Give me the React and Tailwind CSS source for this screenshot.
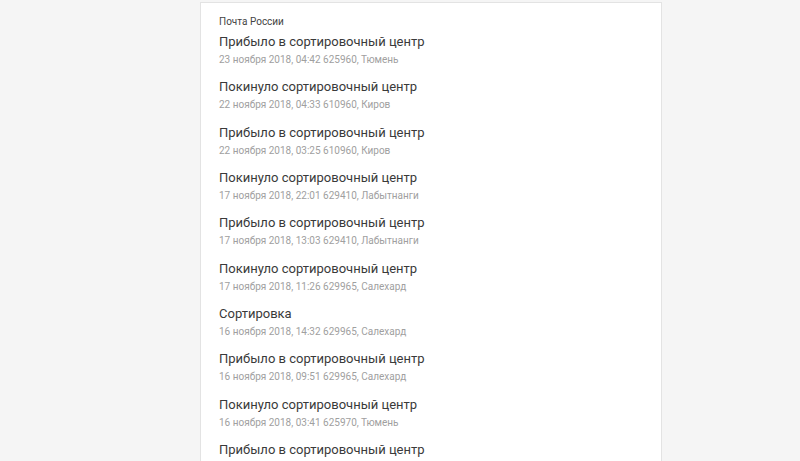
import React from "react";

const events = [
  { title: "Прибыло в сортировочный центр", date: "23 ноября 2018, 04:42", place: "625960, Тюмень" },
  { title: "Покинуло сортировочный центр", date: "22 ноября 2018, 04:33", place: "610960, Киров" },
  { title: "Прибыло в сортировочный центр", date: "22 ноября 2018, 03:25", place: "610960, Киров" },
  { title: "Покинуло сортировочный центр", date: "17 ноября 2018, 22:01", place: "629410, Лабытнанги" },
  { title: "Прибыло в сортировочный центр", date: "17 ноября 2018, 13:03", place: "629410, Лабытнанги" },
  { title: "Покинуло сортировочный центр", date: "17 ноября 2018, 11:26", place: "629965, Салехард" },
  { title: "Сортировка", date: "16 ноября 2018, 14:32", place: "629965, Салехард" },
  { title: "Прибыло в сортировочный центр", date: "16 ноября 2018, 09:51", place: "629965, Салехард" },
  { title: "Покинуло сортировочный центр", date: "16 ноября 2018, 03:41", place: "625970, Тюмень" },
  { title: "Прибыло в сортировочный центр", date: "16 ноября 2018, 01:12", place: "625970, Тюмень" },
];

const App = () => {
  return (
    <div
      className="h-[461px] overflow-hidden bg-[#f5f5f5]"
      style={{ fontFamily: "Roboto, 'Liberation Sans', sans-serif" }}
    >
      <div className="ml-[200px] mt-[2px] w-[462px] min-h-[500px] bg-white border-t border-x border-[#e3e3e3] pl-[18px] pt-[11px]">
        <div className="text-[10px] leading-[16px] text-[#444]">Почта России</div>
        <ul>
          {events.map((ev, idx) => (
            <li key={idx} className="h-[45.33px] pt-[2px]">
              <div className="text-[13px] leading-[19px] text-[#3a3a3a]">{ev.title}</div>
              <div className="mt-[1px] text-[10px] leading-[15px] text-[#a0a0a0]">
                {ev.date} {ev.place}
              </div>
            </li>
          ))}
        </ul>
      </div>
    </div>
  );
};

export default App;
